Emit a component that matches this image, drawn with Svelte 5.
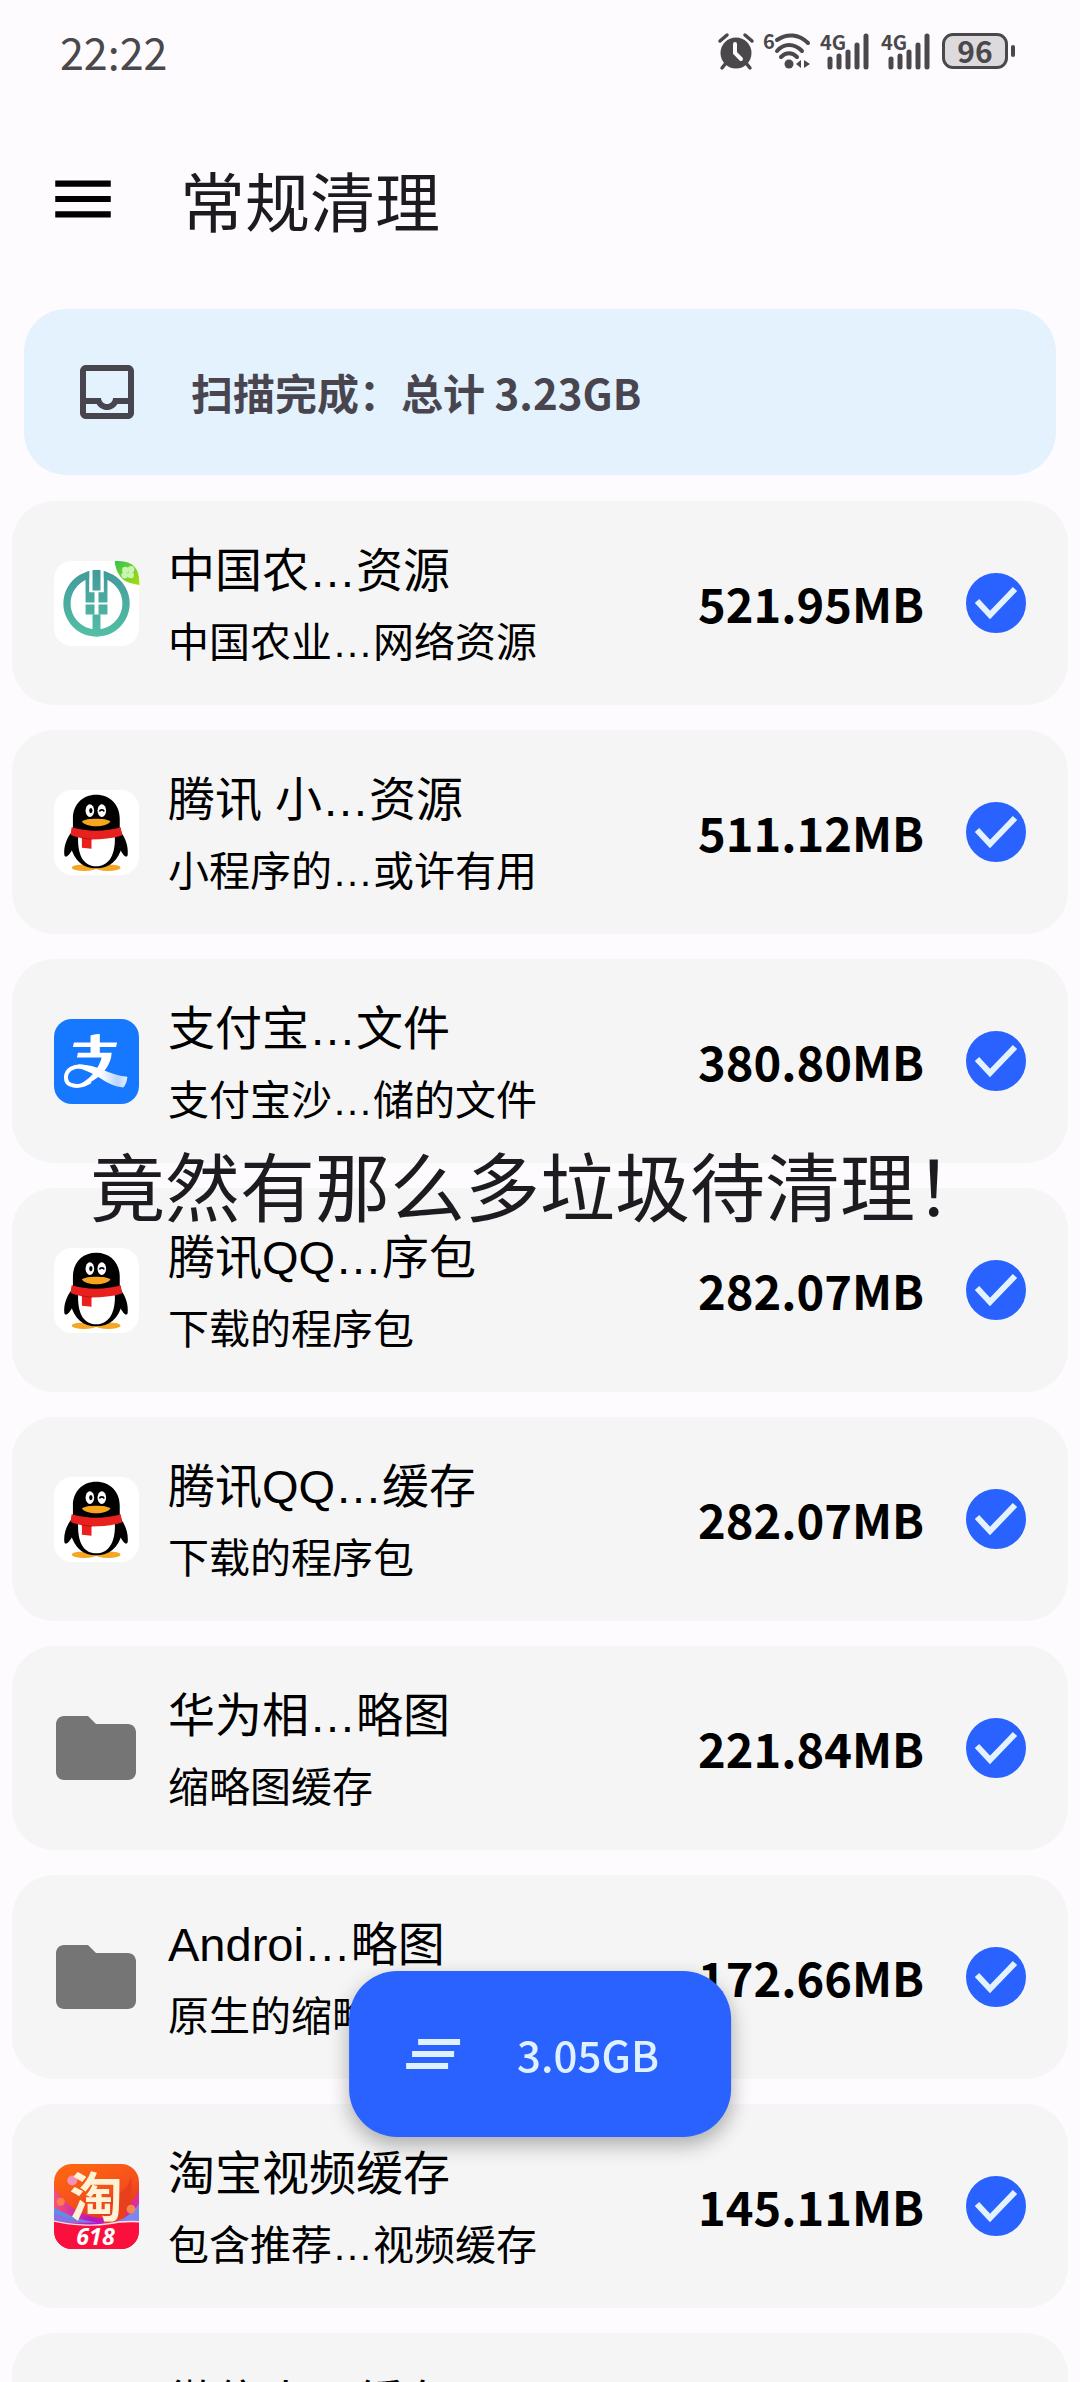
<script lang="ts">
  type IconName = 'bank' | 'penguin' | 'pay' | 'folder' | 'shop';

  interface JunkItem {
    id: number
    icon: IconName
    name: string
    desc: string
    size: string
    checked: boolean
  }

  let items = $state<JunkItem[]>([
    {id: 1, icon: 'bank', name: '中国农…资源', desc: '中国农业…网络资源', size: '521.95MB', checked: true},
    {id: 2, icon: 'penguin', name: '腾讯 小…资源', desc: '小程序的…或许有用', size: '511.12MB', checked: true},
    {id: 3, icon: 'pay', name: '支付宝…文件', desc: '支付宝沙…储的文件', size: '380.80MB', checked: true},
    {id: 4, icon: 'penguin', name: '腾讯QQ…序包', desc: '下载的程序包', size: '282.07MB', checked: true},
    {id: 5, icon: 'penguin', name: '腾讯QQ…缓存', desc: '下载的程序包', size: '282.07MB', checked: true},
    {id: 6, icon: 'folder', name: '华为相…略图', desc: '缩略图缓存', size: '221.84MB', checked: true},
    {id: 7, icon: 'folder', name: 'Androi…略图', desc: '原生的缩略图缓存', size: '172.66MB', checked: true},
    {id: 8, icon: 'shop', name: '淘宝视频缓存', desc: '包含推荐…视频缓存', size: '145.11MB', checked: true},
    {id: 9, icon: 'folder', name: '微信小…缓存', desc: '小程序缓存', size: '98.20MB', checked: true},
  ]);
</script>

{#snippet signal()}
  <svg class="signal" viewBox="0 0 52 40" aria-hidden="true">
    <text x="0" y="19" font-size="20">4G</text>
    <g stroke="currentColor" stroke-width="5" stroke-linecap="round">
      <path d="M10 28v8M19 25v11M28 21v15M37 14v22M46 5v31" />
    </g>
  </svg>
{/snippet}

{#snippet appIcon(name: IconName)}
  {#if name === 'bank'}
    <svg class="app-icon" viewBox="0 0 256 256" aria-hidden="true">
      <defs>
        <linearGradient id="bank-ring" x1="0" y1="28" x2="0" y2="228" gradientUnits="userSpaceOnUse">
          <stop offset="0" stop-color="#429a9c" />
          <stop offset="1" stop-color="#53bfa5" />
        </linearGradient>
        <linearGradient id="bank-leaf" x1="0" y1="0" x2="1" y2="1">
          <stop offset="0" stop-color="#35c350" />
          <stop offset="1" stop-color="#aadd0c" />
        </linearGradient>
      </defs>
      <rect width="256" height="256" rx="54" fill="#fff" />
      <path
        fill="url(#bank-ring)"
        fill-rule="evenodd"
        d="M128 28a100 100 0 1 0 .1 0zM128 50a78 78 0 1 1-.1 0z"
      />
      <path d="M106 22h44v50h-44z" fill="#fff" />
      <g fill="url(#bank-ring)">
        <path d="M95 34l11-4v64h16v31H95z" />
        <path d="M161 34l-11-4v64h-16v31h27z" />
        <path d="M116 27h24v62h-24z" />
        <path d="M95 131h27v30H95zM134 131h27v30h-27z" />
        <path d="M116 161h24v62h-24z" />
      </g>
      <path d="M183 0c30 0 54 4 66 26 8 15 8 32 8 46-24-4-46-8-58-26-11-16-15-29-16-46z" fill="url(#bank-leaf)" />
      <g fill="#c8f5b0">
        <circle cx="215" cy="27" r="10" />
        <circle cx="232" cy="25" r="10" />
        <circle cx="213" cy="43" r="10" />
        <circle cx="231" cy="42" r="10" />
      </g>
    </svg>
  {:else if name === 'penguin'}
    <svg class="app-icon" viewBox="0 0 256 256" aria-hidden="true">
      <rect width="256" height="256" rx="54" fill="#fff" />
      <ellipse cx="91" cy="234" rx="37" ry="10" fill="#f5a623" />
      <ellipse cx="163" cy="234" rx="37" ry="10" fill="#f5a623" />
      <path d="M52 128c-14 18-23 42-21 66 1 10 9 8 16-2 5-6 9-13 12-20zM202 128c14 18 22 42 20 66-1 10-9 8-15-2-5-6-9-13-12-20z" fill="#000" />
      <path d="M127 14c-42 0-70 30-70 72v26c-8 18-10 36-6 58 8 42 38 66 76 66s69-24 77-66c4-22 2-40-6-58V86c0-42-29-72-71-72z" fill="#000" />
      <path d="M73 134c-4 58 14 96 54 96s60-38 56-96c-36 14-76 14-110 0z" fill="#fff" />
      <ellipse cx="108" cy="62" rx="13" ry="19" fill="#fff" />
      <ellipse cx="144" cy="62" rx="13" ry="19" fill="#fff" />
      <ellipse cx="111" cy="62" rx="5" ry="8" fill="#000" />
      <path d="M137 65c2-7 12-7 14 0" fill="none" stroke="#000" stroke-width="5" />
      <path d="M84 94c14-10 72-10 86 0-10 20-76 20-86 0z" fill="#f6a51c" />
      <path d="M53 112c46 14 102 14 148 0l4 25c-30 9-60 12-92 12v28l-29-3v-29c-13-2-24-5-34-10z" fill="#e8211f" />
      <path d="M84 144c10 2 20 4 29 4" fill="none" stroke="#b80e10" stroke-width="3" />
    </svg>
  {:else if name === 'pay'}
    <svg class="app-icon" viewBox="0 0 256 256" aria-hidden="true">
      <defs>
        <linearGradient id="pay-tail" x1="0" y1="0" x2="1" y2="0">
          <stop offset="0.45" stop-color="#fff" />
          <stop offset="0.8" stop-color="#b9d5ff" />
          <stop offset="1" stop-color="#e2edff" />
        </linearGradient>
      </defs>
      <rect width="256" height="256" rx="54" fill="#1677ff" />
      <g fill="#fff">
        <path d="M60 71h130l-3 13H57z" />
        <path d="M110 50q12-6 28-5v64h-28z" />
        <path d="M72 102h102l-3 14H69z" />
      </g>
      <path d="M110 188c-38 24-76 14-74-14 2-22 24-34 52-30 26 4 48 18 70 32" fill="none" stroke="#fff" stroke-width="12" />
      <path d="M145 110h28c-6 34-28 62-66 82-16 8-30 13-45 13 44-20 74-52 83-95z" fill="#fff" />
      <path d="M72 137c56-2 88 30 149 37-1 14-5 24-12 32-52-4-80-46-137-58z" fill="url(#pay-tail)" />
    </svg>
  {:else if name === 'shop'}
    <svg class="app-icon" viewBox="0 0 256 256" aria-hidden="true">
      <defs>
        <clipPath id="shop-clip"><rect width="256" height="256" rx="54" /></clipPath>
        <linearGradient id="shop-bg" x1="0" y1="0" x2="0.4" y2="1">
          <stop offset="0" stop-color="#ff6a10" />
          <stop offset="0.5" stop-color="#f4501c" />
          <stop offset="1" stop-color="#d8231c" />
        </linearGradient>
        <linearGradient id="shop-wave" x1="0" y1="0" x2="1" y2="0">
          <stop offset="0" stop-color="#f4517a" />
          <stop offset="0.45" stop-color="#b414c4" />
          <stop offset="1" stop-color="#e0309c" />
        </linearGradient>
      </defs>
      <g clip-path="url(#shop-clip)">
        <rect width="256" height="256" fill="url(#shop-bg)" />
        <path d="M0 72c30 40 60 76 130 90 60 10 96-24 126-82v110H0z" fill="url(#shop-wave)" />
        <path d="M170 100c30-10 50-20 62-60 10 60-10 110-32 140h-50z" fill="#e8401c" />
        <path d="M0 132c60 30 80 38 130 44H0z" fill="#5b8fe8" />
        <path d="M0 148c50 20 80 24 110 28H0z" fill="#8c6fe0" />
        <path d="M256 120c-20 30-46 48-80 56h80z" fill="#7d86ea" />
        <circle cx="55" cy="50" r="15" fill="#f78fb6" />
        <circle cx="20" cy="114" r="12" fill="#fa7d50" />
        <circle cx="232" cy="136" r="13" fill="#f9884f" />
        <path d="M0 172c50 12 120 16 164 8 30-6 60-8 92-6v82H0z" fill="#fb0f3c" />
        <path d="M0 172c50 12 120 16 164 8 30-6 60-8 92-6" fill="none" stroke="#ffdfe6" stroke-width="4" />
        <text x="127" y="160" class="shop-char">淘</text>
        <text x="125" y="244" class="shop-sale">618</text>
      </g>
    </svg>
  {:else}
    <svg class="folder-icon" viewBox="0 0 24 24" aria-hidden="true">
      <path fill="#757575" d="M10 4H4c-1.100 0-2 .9-2 2v12c0 1.100.9 2 2 2h16c1.100 0 2-.9 2-2V8c0-1.100-.9-2-2-2h-8z" />
    </svg>
  {/if}
{/snippet}

<div class="screen">
  <div class="status-bar">
    <span class="time">22:22</span>
    <div class="status-icons">
      <svg class="alarm" viewBox="0 0 36 40" aria-hidden="true">
        <circle cx="18" cy="22" r="15.500" fill="currentColor" />
        <g fill="none" stroke="currentColor" stroke-width="3.500" stroke-linecap="round">
          <path d="M2 10l7-6M34 10l-7-6M8 32l-4 5M28 32l4 5" />
        </g>
        <path d="M17 13v9l6 6" fill="none" stroke="#fefbff" stroke-width="4" stroke-linecap="round" />
      </svg>
      <svg class="wifi" viewBox="0 0 48 40" aria-hidden="true">
        <text x="0" y="18" font-size="20">6</text>
        <g fill="none" stroke="currentColor" stroke-width="4" stroke-linecap="round">
          <path d="M14 9c10-7 22-6 31 3M14 20c7-8 17-8 25 0M18 26c5-5 11-5 16 0" />
        </g>
        <circle cx="26" cy="33" r="4.500" fill="currentColor" />
        <path d="M38 29v8l-5-4zM41 29v8l6-4z" fill="currentColor" />
      </svg>
      {@render signal()}
      {@render signal()}
      <span class="battery">96</span>
    </div>
  </div>

  <header class="app-bar">
    <button class="menu-button" aria-label="菜单">
      <svg viewBox="0 0 24 24" aria-hidden="true">
        <path d="M3 18h18v-2H3zm0-5h18v-2H3zm0-7v2h18V6z" />
      </svg>
    </button>
    <h1>常规清理</h1>
  </header>

  <main>
    <section class="summary">
      <svg viewBox="0 0 24 24" aria-hidden="true">
        <path
          fill="currentColor"
          d="M19 3H5c-1.100 0-2 .9-2 2v14c0 1.100.9 2 2 2h14c1.100 0 2-.9 2-2V5c0-1.100-.9-2-2-2zm0 16H5v-3h3.560c.69 1.190 1.970 2 3.450 2s2.750-.81 3.450-2H19v3zm0-5h-4.990c0 1.100-.9 2-2 2s-2-.9-2-2H5V5h14v9z"
        />
      </svg>
      <p>扫描完成：总计 3.23GB</p>
    </section>

    <ul class="list">
      {#each items as item (item.id)}
        <li class="card">
          <div class="icon-slot">{@render appIcon(item.icon)}</div>
          <div class="info">
            <h2>{item.name}</h2>
            <p>{item.desc}</p>
          </div>
          <span class="size">{item.size}</span>
          <label class="check">
            <input type="checkbox" bind:checked={item.checked} aria-label={item.name} />
            <svg viewBox="0 0 60 60" aria-hidden="true">
              <path d="M11 28l13 14 25-26" />
            </svg>
          </label>
        </li>
      {/each}
    </ul>
  </main>

  <p class="caption">竟然有那么多垃圾待清理！</p>

  <button class="fab">
    <svg viewBox="0 0 24 24" aria-hidden="true">
      <path fill="currentColor" d="M5 13h14v-2H5zm-2 4h14v-2H3zM7 7v2h14V7z" />
    </svg>
    <span>3.05GB</span>
  </button>
</div>

<style>
  :global(body) {
    margin: 0;
    background: #fefbff;
  }

  .screen {
    height: 100vh;
    overflow: hidden;
    background: #fefbff;
    color: #1d1b20;
    font-family: 'Noto Sans CJK SC', sans-serif;
  }

  h1,
  h2,
  p,
  ul {
    margin: 0;
    padding: 0;
    font-weight: 400;
  }

  button {
    border: none;
    background: none;
    padding: 0;
    font-family: inherit;
    cursor: pointer;
  }

  svg {
    display: block;
    overflow: visible;
  }

  .status-bar {
    display: flex;
    align-items: center;
    justify-content: space-between;
    box-sizing: border-box;
    height: 96px;
    padding: 6px 64px 0 60px;
    color: #4a484b;
  }

  .time {
    font-size: 43px;
    line-height: 48px;
  }

  .status-icons {
    display: flex;
    align-items: center;
    gap: 9px;
  }

  .status-icons svg {
    height: 40px;
  }

  .status-icons text {
    fill: currentColor;
    font-family: 'Noto Sans CJK SC', sans-serif;
    font-weight: 700;
  }

  .alarm {
    width: 36px;
  }

  .wifi {
    width: 48px;
  }

  .signal {
    width: 52px;
  }

  .battery {
    position: relative;
    box-sizing: border-box;
    width: 66px;
    height: 36px;
    margin-right: 8px;
    border: 3px solid currentColor;
    border-radius: 11px;
    background: #dcdadc;
    font-size: 30px;
    font-weight: 700;
    line-height: 28px;
    text-align: center;
  }

  .battery::after {
    content: '';
    position: absolute;
    top: 9px;
    right: -10px;
    width: 4px;
    height: 12px;
    border-radius: 2px;
    background: currentColor;
  }

  .app-bar {
    display: flex;
    align-items: center;
    gap: 60px;
    box-sizing: border-box;
    height: 213px;
    padding: 0 46px 8px;
  }

  .menu-button svg {
    width: 74px;
    height: 74px;
  }

  h1 {
    font-size: 65px;
    line-height: 80px;
  }

  .summary {
    display: flex;
    align-items: center;
    gap: 48px;
    height: 166px;
    margin: 0 24px;
    padding: 0 47px;
    border-radius: 42px;
    background: #e3f2fd;
    color: #49454f;
  }

  .summary svg {
    width: 72px;
    height: 72px;
  }

  .summary p {
    font-size: 42px;
    font-weight: 700;
    line-height: 56px;
  }

  .list {
    display: flex;
    flex-direction: column;
    gap: 25px;
    margin: 26px 12px 0;
    list-style: none;
  }

  .card {
    display: flex;
    align-items: center;
    padding: 30px 36px;
    border-radius: 42px;
    background: #f5f5f5;
    color: #000;
  }

  .icon-slot {
    display: grid;
    place-items: center;
    width: 96px;
    height: 96px;
    margin-right: 24px;
  }

  .app-icon {
    width: 85px;
    height: 85px;
  }

  .folder-icon {
    width: 96px;
    height: 96px;
  }

  .shop-char {
    fill: #fff3d6;
    font-family: 'Noto Sans CJK SC', sans-serif;
    font-size: 160px;
    font-weight: 700;
    text-anchor: middle;
  }

  .shop-sale {
    fill: #fff;
    font-family: 'Open Sans', sans-serif;
    font-size: 70px;
    font-style: italic;
    font-weight: 700;
    text-anchor: middle;
  }

  .info {
    flex: 1;
    font-family: 'Liberation Sans', 'Noto Sans CJK SC', sans-serif;
    white-space: nowrap;
  }

  .info h2 {
    font-size: 47px;
    line-height: 80px;
  }

  .info p {
    font-size: 41px;
    line-height: 64px;
  }

  .size {
    margin-right: 36px;
    font-size: 47px;
    font-weight: 700;
    line-height: 60px;
  }

  .check {
    display: grid;
    place-items: center;
    width: 72px;
    height: 72px;
    cursor: pointer;
  }

  .check input,
  .check svg {
    grid-area: 1 / 1;
    width: 60px;
    height: 60px;
    margin: 0;
  }

  .check input {
    appearance: none;
    box-sizing: border-box;
    border: 6px solid #757575;
    border-radius: 50%;
  }

  .check input:checked {
    border-color: #2962ff;
    background: #2962ff;
  }

  .check svg {
    fill: none;
    stroke: #e3f2fd;
    stroke-width: 6;
    pointer-events: none;
    visibility: hidden;
  }

  .check input:checked + svg {
    visibility: visible;
  }

  .caption {
    position: fixed;
    top: 50%;
    left: 0;
    right: 0;
    transform: translateY(-50%);
    padding-bottom: 14px;
    font-size: 75px;
    line-height: 100px;
    text-align: center;
    white-space: nowrap;
    pointer-events: none;
  }

  .fab {
    position: fixed;
    bottom: 245px;
    left: 50%;
    transform: translateX(-50%);
    display: flex;
    align-items: center;
    gap: 48px;
    height: 166px;
    padding: 0 72px 0 48px;
    border-radius: 48px;
    background: #2962ff;
    box-shadow: 0 8px 20px rgba(0, 0, 0, 0.3);
    color: #dff1ff;
    font-size: 42px;
    font-weight: 500;
    line-height: 56px;
  }

  .fab svg {
    width: 72px;
    height: 72px;
  }
</style>
